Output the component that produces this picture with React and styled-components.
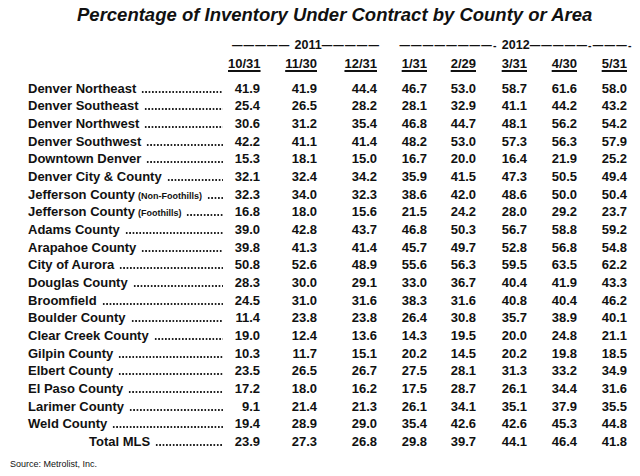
import React from "react";
import styled, { createGlobalStyle } from "styled-components";

const GlobalStyle = createGlobalStyle`
  html, body {
    margin: 0;
    padding: 0;
    background: #ffffff;
  }
  body {
    font-family: "Liberation Sans", Arial, sans-serif;
    color: #111111;
  }
`;

const COLS = "200px 32px 57px 60px 50px 49px 51px 50px 50px";

const Page = styled.div`
  width: 640px;
  height: 476px;
  box-sizing: border-box;
  padding: 4px 0 0 28px;
  background: #fff;
`;

const Title = styled.h1`
  margin: 0 0 0 49px;
  height: 32px;
  line-height: 22px;
  font-size: 18.5px;
  font-weight: bold;
  font-style: italic;
  white-space: nowrap;
`;

const Grid = styled.div`
  display: grid;
  grid-template-columns: ${COLS};
`;

const YearRow = styled(Grid)`
  height: 18px;
  align-items: center;
  font-size: 12.5px;
  font-weight: bold;
`;

const YearSpan = styled.div`
  grid-column: ${(p) => p.$from} / ${(p) => p.$to};
  padding-left: ${(p) => p.$indent}px;
  display: flex;
  align-items: center;
  justify-content: center;
  white-space: pre;
`;

const Dashes = styled.span`
  font-size: 10.5px;
  letter-spacing: 1.2px;
  font-weight: bold;
`;

const HeadRow = styled(Grid)`
  height: 18px;
  margin-bottom: 7.5px;
  align-items: center;
  font-size: 13px;
  font-weight: bold;
`;

const DateHead = styled.div`
  grid-column: ${(p) => p.$col};
  text-align: right;
  text-decoration: underline;
  text-decoration-thickness: 1.5px;
  text-underline-offset: 2px;
`;

const DataRow = styled(Grid)`
  height: 17.67px;
  align-items: center;
  font-size: 13px;
  font-weight: bold;
`;

const Label = styled.div`
  display: flex;
  align-items: baseline;
  padding-left: ${(p) => (p.$total ? 61 : 0)}px;
  padding-right: 5px;
  white-space: nowrap;
`;

const Note = styled.span`
  font-size: 9px;
  margin-left: 3px;
`;

/* dotted leader between the area name and the first figure */
const Leader = styled.span`
  flex: 1;
  height: 2px;
  margin-left: 5px;
  background-image: radial-gradient(circle, #222 0.8px, transparent 1.1px);
  background-size: 3.4px 2px;
  background-repeat: repeat-x;
  background-position: left bottom;
`;

const Num = styled.div`
  text-align: right;
`;

const Source = styled.div`
  margin: 9px 0 0 -18px;
  font-size: 9px;
  line-height: 11px;
`;

const years = [
  { label: "2011", from: 2, to: 5, indent: 7, left: "————— ", right: "—————" },
  { label: "2012", from: 5, to: 10, indent: 28, left: "————————- ", right: "—————-———-" },
];

const dates = ["10/31", "11/30", "12/31", "1/31", "2/29", "3/31", "4/30", "5/31"];

const rows = [
  ["Denver Northeast", "", [41.9, 41.9, 44.4, 46.7, 53.0, 58.7, 61.6, 58.0]],
  ["Denver Southeast", "", [25.4, 26.5, 28.2, 28.1, 32.9, 41.1, 44.2, 43.2]],
  ["Denver Northwest", "", [30.6, 31.2, 35.4, 46.8, 44.7, 48.1, 56.2, 54.2]],
  ["Denver Southwest", "", [42.2, 41.1, 41.4, 48.2, 53.0, 57.3, 56.3, 57.9]],
  ["Downtown Denver", "", [15.3, 18.1, 15.0, 16.7, 20.0, 16.4, 21.9, 25.2]],
  ["Denver City & County", "", [32.1, 32.4, 34.2, 35.9, 41.5, 47.3, 50.5, 49.4]],
  ["Jefferson County", "(Non-Foothills)", [32.3, 34.0, 32.3, 38.6, 42.0, 48.6, 50.0, 50.4]],
  ["Jefferson County", "(Foothills)", [16.8, 18.0, 15.6, 21.5, 24.2, 28.0, 29.2, 23.7]],
  ["Adams County", "", [39.0, 42.8, 43.7, 46.8, 50.3, 56.7, 58.8, 59.2]],
  ["Arapahoe County", "", [39.8, 41.3, 41.4, 45.7, 49.7, 52.8, 56.8, 54.8]],
  ["City of Aurora", "", [50.8, 52.6, 48.9, 55.6, 56.3, 59.5, 63.5, 62.2]],
  ["Douglas County", "", [28.3, 30.0, 29.1, 33.0, 36.7, 40.4, 41.9, 43.3]],
  ["Broomfield", "", [24.5, 31.0, 31.6, 38.3, 31.6, 40.8, 40.4, 46.2]],
  ["Boulder County", "", [11.4, 23.8, 23.8, 26.4, 30.8, 35.7, 38.9, 40.1]],
  ["Clear Creek County", "", [19.0, 12.4, 13.6, 14.3, 19.5, 20.0, 24.8, 21.1]],
  ["Gilpin County", "", [10.3, 11.7, 15.1, 20.2, 14.5, 20.2, 19.8, 18.5]],
  ["Elbert County", "", [23.5, 26.5, 26.7, 27.5, 28.1, 31.3, 33.2, 34.9]],
  ["El Paso County", "", [17.2, 18.0, 16.2, 17.5, 28.7, 26.1, 34.4, 31.6]],
  ["Larimer County", "", [9.1, 21.4, 21.3, 26.1, 34.1, 35.1, 37.9, 35.5]],
  ["Weld County", "", [19.4, 28.9, 29.0, 35.4, 42.6, 42.6, 45.3, 44.8]],
];

const total = ["Total MLS", "", [23.9, 27.3, 26.8, 29.8, 39.7, 44.1, 46.4, 41.8]];

const Row = ({ name, note, values, isTotal }) => (
  <DataRow>
    <Label $total={isTotal}>
      <span>{name}</span>
      {note && <Note>{note}</Note>}
      <Leader />
    </Label>
    {values.map((v, i) => (
      <Num key={i}>{v.toFixed(1)}</Num>
    ))}
  </DataRow>
);

export default function App() {
  return (
    <>
      <GlobalStyle />
      <Page>
        <Title>Percentage of Inventory Under Contract by County or Area</Title>
        <YearRow>
          {years.map((y) => (
            <YearSpan key={y.label} $from={y.from} $to={y.to} $indent={y.indent}>
              <Dashes>{y.left}</Dashes>
              {y.label}
              <Dashes>{y.right}</Dashes>
            </YearSpan>
          ))}
        </YearRow>
        <HeadRow>
          {dates.map((d, i) => (
            <DateHead key={d} $col={i + 2}>
              {d}
            </DateHead>
          ))}
        </HeadRow>
        {rows.map(([name, note, values], i) => (
          <Row key={i} name={name} note={note} values={values} />
        ))}
        <Row name={total[0]} note="" values={total[2]} isTotal />
        <Source>Source: Metrolist, Inc.</Source>
      </Page>
    </>
  );
}
